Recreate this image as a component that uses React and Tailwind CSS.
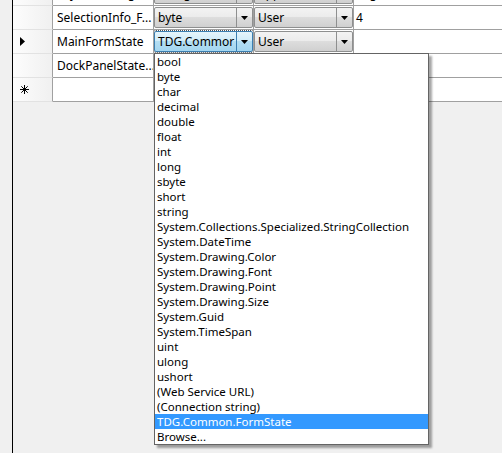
import React from "react";

const FONT = { fontFamily: '"Noto Sans", "Open Sans", sans-serif' };

const ITEMS = [
  "bool",
  "byte",
  "char",
  "decimal",
  "double",
  "float",
  "int",
  "long",
  "sbyte",
  "short",
  "string",
  "System.Collections.Specialized.StringCollection",
  "System.DateTime",
  "System.Drawing.Color",
  "System.Drawing.Font",
  "System.Drawing.Point",
  "System.Drawing.Size",
  "System.Guid",
  "System.TimeSpan",
  "uint",
  "ulong",
  "ushort",
  "(Web Service URL)",
  "(Connection string)",
  "TDG.Common.FormState",
  "Browse...",
];

function DownArrow() {
  return (
    <svg width="7" height="4" viewBox="0 0 7 4">
      <path d="M0 0h7L3.5 4z" fill="#000" />
    </svg>
  );
}

function Combo({ text, focused }) {
  const face = focused
    ? "bg-[linear-gradient(#e5f5fc,#cfebf8_50%,#b3def3_50%,#a4d6f0)] border-[#3c7fb1]"
    : "bg-[linear-gradient(#f3f3f3,#ebebeb_50%,#dddddd_50%,#d0d0d0)] border-[#8e8f8f]";
  return (
    <div className={`h-[21px] my-px flex rounded-[2px] border ${face} ${focused ? "outline outline-1 outline-dotted outline-[#555] outline-offset-0" : ""}`}>
      <div className="flex-1 min-w-0 overflow-hidden whitespace-nowrap pl-[3px] text-[12px] leading-[19px] text-black">
        {text}
      </div>
      <div className={`w-[16px] shrink-0 flex items-center justify-center border-l ${focused ? "border-[#3c7fb1]" : "border-[#8e8f8f]"}`}>
        <DownArrow />
      </div>
    </div>
  );
}

function Row({ header, name, c2, c3, c4, focused, partial }) {
  return (
    <div className={`flex ${partial ? "h-[6px] items-end" : "h-[24px]"}`}>
      <div className="w-[40px] h-full overflow-hidden flex items-center pl-[7px] border-b border-b-[#e2e2e2] border-r border-r-[#a0a0a0] bg-[linear-gradient(90deg,#fdfdfd,#f0f0f0)]">
        {header}
      </div>
      <div className="w-[101px] h-full overflow-hidden bg-white border-r border-b border-[#a0a0a0] flex flex-col justify-end">
        <div className="h-[23px] shrink-0 pl-[4px] text-[12px] leading-[23px] whitespace-nowrap text-black">{name}</div>
      </div>
      <div className="w-[100px] h-full overflow-hidden bg-white border-r border-b border-[#a0a0a0] flex flex-col justify-end">
        <div className="h-[23px] shrink-0">{c2 != null && <Combo text={c2} focused={focused} />}</div>
      </div>
      <div className="w-[100px] h-full overflow-hidden bg-white border-r border-b border-[#a0a0a0] flex flex-col justify-end">
        <div className="h-[23px] shrink-0">{c3 != null && <Combo text={c3} />}</div>
      </div>
      <div className="flex-1 h-full overflow-hidden bg-white border-b border-[#a0a0a0] flex flex-col justify-end">
        <div className="h-[23px] shrink-0 pl-[2px] text-[12px] leading-[23px] text-black">{c4}</div>
      </div>
    </div>
  );
}

const RowArrow = (
  <svg width="5" height="9" viewBox="0 0 5 9">
    <path d="M0 0l5 4.5L0 9z" fill="#000" />
  </svg>
);

const NewRowStar = (
  <svg width="9" height="9" viewBox="0 0 9 9" stroke="#000" strokeWidth="1">
    <path d="M4.5 0v9M0 4.5h9M1.3 1.3l6.4 6.4M7.7 1.3L1.3 7.7" />
  </svg>
);

export default function App() {
  return (
    <div className="relative w-[502px] h-[453px] overflow-hidden bg-[#f0f0f0] flex" style={FONT}>
      <div className="w-[12px] shrink-0" />
      <div className="w-px shrink-0 bg-black" />
      <div className="flex-1 flex flex-col">
        <Row partial name="LayoutSettings" c2="string" c3="Application" c4="Log" />
        <Row name="SelectionInfo_F..." c2="byte" c3="User" c4="4" />
        <Row header={RowArrow} name="MainFormState" c2="TDG.Commor" c3="User" focused />
        <Row name="DockPanelState..." />
        <Row header={NewRowStar} name="" />
      </div>

      <div className="absolute left-[154px] top-[53px] w-[275px] bg-white border border-[#646464] shadow-[3px_3px_2px_rgba(0,0,0,0.35)]">
        {ITEMS.map((it) => (
          <div
            key={it}
            className={`h-[15px] pl-[2px] text-[11.5px] leading-[15px] whitespace-nowrap ${
              it === "TDG.Common.FormState" ? "bg-[#3399ff] text-white" : "text-black"
            }`}
          >
            {it}
          </div>
        ))}
      </div>
    </div>
  );
}
